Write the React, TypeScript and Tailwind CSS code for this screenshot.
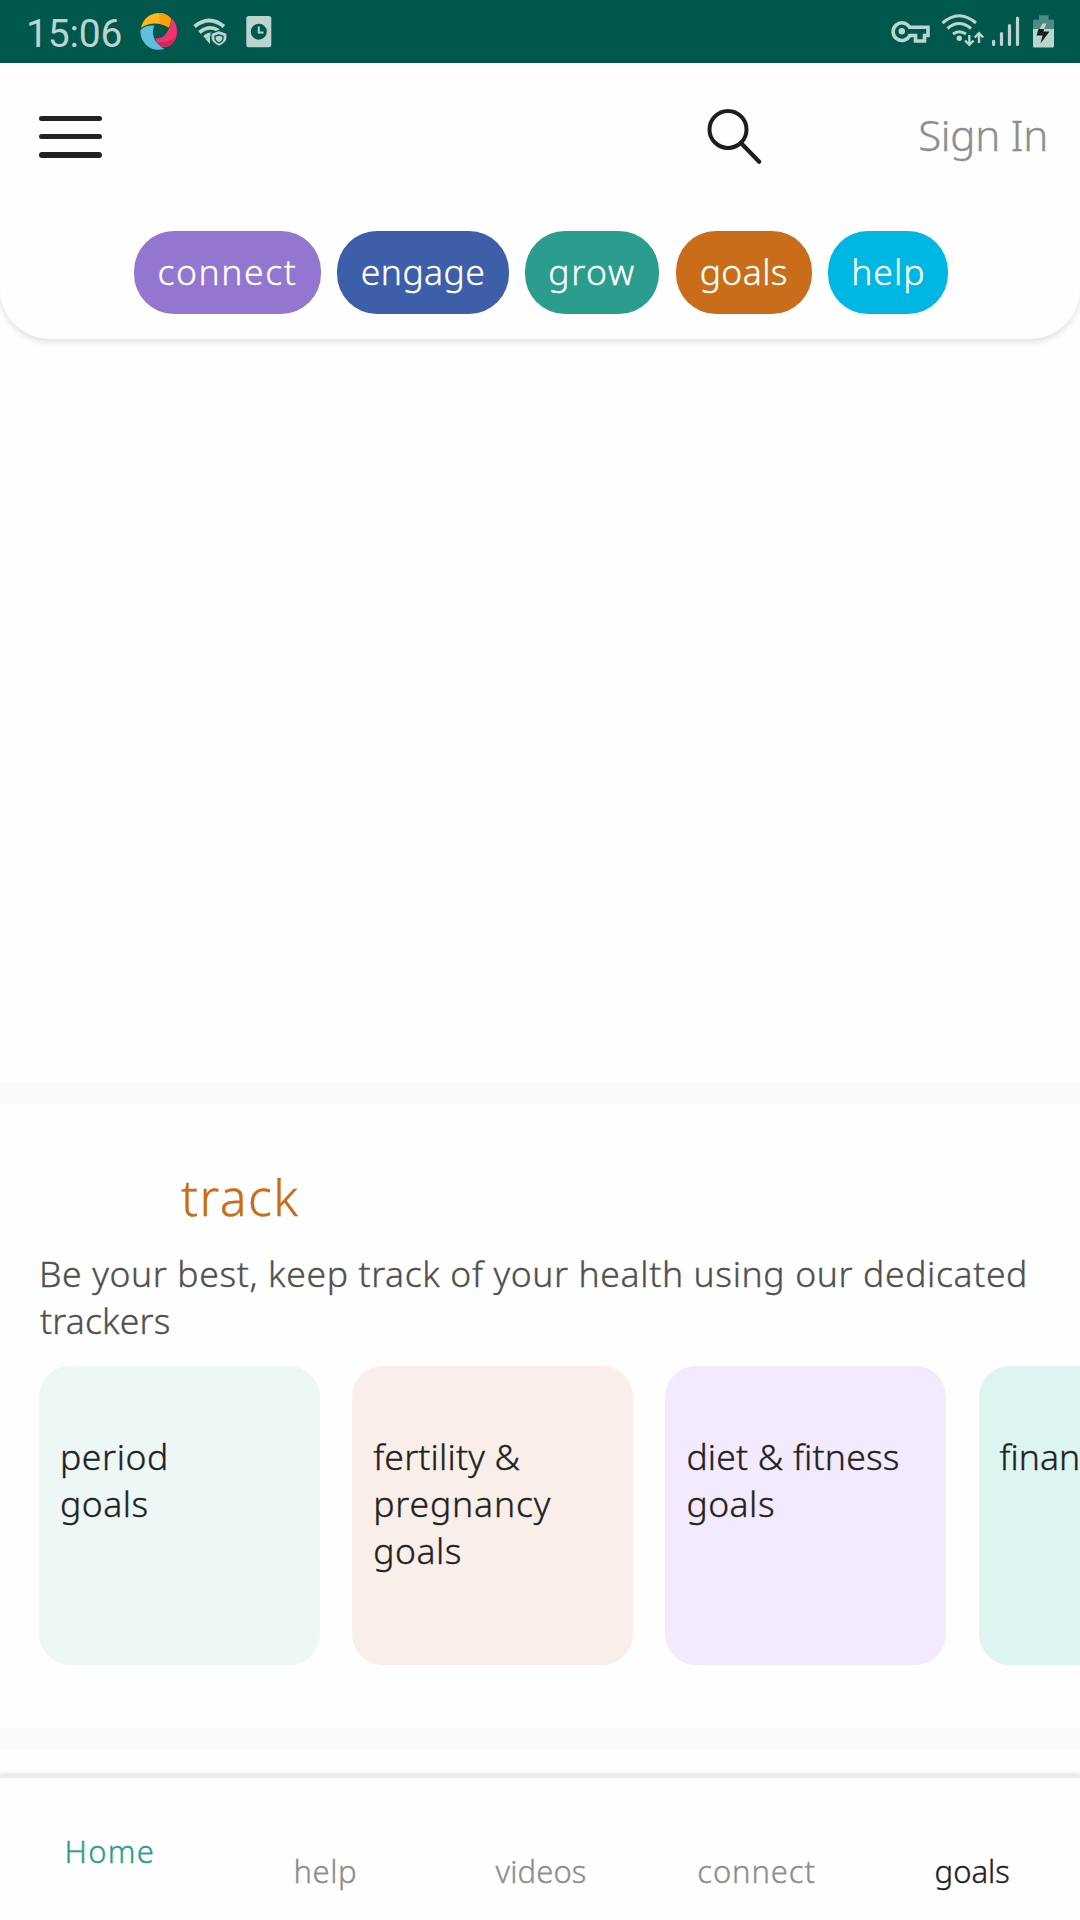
import type { ReactNode } from "react";

const pills = [
  { label: "connect", cls: "w-[187px] bg-[#9376d0] tracking-[1.6px]" },
  { label: "engage", cls: "w-[172px] bg-[#3d5ea8] tracking-[0.4px]" },
  { label: "grow", cls: "mr-[0.800px] w-[134px] bg-[#2b9d8f] tracking-[1.6px]" },
  { label: "goals", cls: "w-[136px] bg-[#c96d1a] tracking-[0.4px]" },
  { label: "help", cls: "w-[120px] bg-[#00b6e3] tracking-[1px] pl-[1px]" },
];

const tabs = [
  { label: "Home", cls: "text-[#2b9d8f] tracking-[1.2px] pt-[51px]" },
  { label: "help", cls: "text-[#8e8e8e] tracking-[0.6px] pt-[71px]" },
  { label: "videos", cls: "text-[#8e8e8e] tracking-[0.1px] pt-[71px]" },
  { label: "connect", cls: "text-[#8e8e8e] tracking-[0.9px] pt-[71px]" },
  { label: "goals", cls: "text-[#222222] tracking-[0px] pt-[71px]" },
];

function StatusBar() {
  return (
    <div className="flex h-[63px] shrink-0 bg-[#00574b] text-[#bcd4d0] [-webkit-text-stroke:0px]">
      <div className="w-[140px] pl-[26px] pt-[10.500px] font-['Roboto',sans-serif] text-[39px] font-normal leading-[46px] tracking-[-0.2px]">
        15:06
      </div>
      <svg width="140" height="63" viewBox="140 0 140 63" fill="none">
        <path d="M141 28 C143 18 151 13 159 13 C164 13 168 15 170.5 18 C171 22 170 25 168.500 27.500 C161 22 148 22 141 28Z" fill="#ffb61a" />
        <path d="M159 13 C164 13 168 15 170.500 18 C171 22 170 25 168.500 27.500 C166 25.500 163 24.500 160 24Z" fill="#ff9d0a" />
        <path d="M171.500 18 C177 23 179 33 175 40 C171 47 165 48.500 160 46 C157 44 156 41 155.500 38 C163 40 170 32 171.500 18Z" fill="#f0326e" />
        <path d="M176 36 C173 45 167 48.500 160 46 C158.500 45 157.500 43.500 157 42 C164 43 171 41 176 36Z" fill="#d3265b" />
        <path d="M140.500 30 C144 26 149 25 154.500 25.500 C151 32 153 43 164.500 49 C158 51 149 49.500 144.500 43 C141 38.500 140 34 140.500 30Z" fill="#62bfd9" />
        <g stroke="#bcd4d0" strokeWidth="3.8">
          <path d="M194.500 26.500 Q209 14.500 224 26.500" />
          <path d="M199.500 32.500 Q209 24.500 218.500 30.500" />
          <path d="M204.500 37.500 Q208 34 212 34.500" />
        </g>
        <path d="M205.500 39 L210 36 V44Z" fill="#bcd4d0" />
        <path d="M219 30.500 L227 33.500 V38 C227 42 223 44.500 219 46.500 C215 44.500 211 42 211 38 V33.500Z" fill="#bcd4d0" stroke="#00574b" strokeWidth="1.200" />
        <path d="M219 34.800 L223 36.300 V38.500 C223 40.500 221 42 219 43 C217 42 215 40.500 215 38.500 V36.300Z" stroke="#00574b" strokeWidth="1.300" />
        <rect x="246.300" y="16" width="25" height="31.300" rx="2.500" fill="#bcd4d0" />
        <circle cx="258.800" cy="31.700" r="8" fill="#00574b" />
        <path d="M258.800 26.500 V32.500 H263.500" stroke="#bcd4d0" strokeWidth="2" />
      </svg>
      <svg className="ml-auto" width="200" height="63" viewBox="880 0 200 63" fill="none">
        <path d="M909.500 27.200 H928 V35.500 H924.500 V41 H915.500 V35.500 H909.800 A8.800 8.800 0 1 1 909.500 27.200Z" stroke="#bcd4d0" strokeWidth="3.600" />
        <circle cx="901.800" cy="31.200" r="3.200" fill="#bcd4d0" />
        <g stroke="#bcd4d0" strokeWidth="3">
          <path d="M942.500 23 Q959 8.500 976 23" />
          <path d="M947.500 28.500 Q959 18.500 971 28.500" />
          <path d="M953 34 Q959 29.500 966 34" />
        </g>
        <circle cx="959.300" cy="38.300" r="2.700" fill="#bcd4d0" />
        <path d="M969.300 35 V44.500 M965 40.500 L969.300 44.800 L973.600 40.500 M979 43 V33.500 M974.700 37.500 L979 33.200 L983.300 37.500" stroke="#bcd4d0" strokeWidth="2.400" />
        <g stroke="#bcd4d0" strokeWidth="3.200" strokeLinecap="round">
          <path d="M993.600 41.300 V44.500 M1001.500 33.500 V44.500 M1009.500 25.500 V44.500 M1017.500 18.200 V44.500" />
        </g>
        <path d="M1039 15.300 H1048.500 V19.800 H1054 V29 H1033 V19.800 H1039Z" fill="#4f8b82" />
        <path d="M1033 29 H1054 V46 Q1054 47.500 1052.500 47.500 H1034.500 Q1033 47.500 1033 46Z" fill="#bcd4d0" />
        <path d="M1042.500 23.500 H1046.500 L1044 29 H1039.500Z" fill="#bcd4d0" />
        <path d="M1038.500 29 H1044 L1043.500 31.500 H1049.500 L1040.500 43.500 L1042.500 35.500 H1036.500Z" fill="#12211f" />
      </svg>
    </div>
  );
}

function Header() {
  return (
    <header className="h-[276px] shrink-0 rounded-b-[50px] bg-[#fefefe] shadow-[0_3px_6px_rgba(0,0,0,0.12)]">
      <div className="flex h-[151px] items-start pl-[39px] pr-[32px]">
        <div className="mt-[53px] flex w-[63px] flex-col gap-[13px]">
          <span className="h-[5px] rounded-full bg-[#222222]" />
          <span className="h-[5px] rounded-full bg-[#222222]" />
          <span className="h-[6px] rounded-full bg-[#222222]" />
        </div>
        <svg className="ml-[604px] mt-[45px]" width="60" height="60" viewBox="706 108 60 60" fill="none" stroke="#1d1d1b">
          <ellipse cx="728" cy="129.400" rx="18.500" ry="18.500" strokeWidth="4" />
          <path d="M741 143 L759.200 161.800" strokeWidth="4.200" strokeLinecap="round" />
        </svg>
        <div className="ml-auto mt-[42px] whitespace-nowrap text-[42px] leading-[60px] tracking-[-0.3px] text-[#8e8e8e]">Sign In</div>
      </div>
      <nav className="mt-[17px] flex gap-4 pl-[134px] text-[35.500px] leading-[47px] text-white">
        {pills.map((p) => (
          <div key={p.label} className={`flex h-[82.700px] items-center justify-center rounded-[40px] pb-[1px] ${p.cls}`}>
            {p.label}
          </div>
        ))}
      </nav>
    </header>
  );
}

function Card({ color, children }: { color: string; children: ReactNode }) {
  return (
    <div className={`h-[299px] w-[280.500px] shrink-0 rounded-[31px] pl-[21px] pt-[66.500px] leading-[47px] ${color}`}>
      {children}
    </div>
  );
}

export default function App() {
  return (
    <div className="flex h-[1920px] w-[1080px] flex-col overflow-hidden bg-[#fefefe] font-['Noto_Sans',sans-serif] font-light [-webkit-text-stroke:0.35px_currentColor]">
      <StatusBar />
      <Header />
      <div className="h-[744px] shrink-0" />
      <div className="h-[21px] shrink-0 bg-[#fafafa]" />
      <section className="h-[624px] shrink-0 pt-[63px]">
        <h2 className="pl-[181px] text-[50px] leading-[60px] tracking-[1.5px] text-[#c96d1a]">track</h2>
        <p className="mt-[22.500px] whitespace-nowrap pl-[39px] text-[35.500px] leading-[47px] tracking-[0.64px] text-[#505050]">
          Be your best, keep track of your health using our dedicated
          <br />
          <span className="pl-[1px] tracking-[0.2px]">trackers</span>
        </p>
        <div className="mt-[22.500px] flex gap-[32.700px] pl-[39px] text-[35.500px] text-[#222222]">
          <Card color="bg-[#edf7f6]">
            <p className="tracking-[0.6px]">period</p>
            <p className="tracking-[0.5px]">goals</p>
          </Card>
          <Card color="bg-[#f9eeea]">
            <p className="tracking-[0.2px]">fertility &amp;</p>
            <p className="tracking-[0.85px]">pregnancy</p>
            <p className="tracking-[0.5px]">goals</p>
          </Card>
          <Card color="bg-[#f3ebfd]">
            <p className="tracking-[0.2px]">diet &amp; fitness</p>
            <p className="tracking-[0.5px]">goals</p>
          </Card>
          <Card color="bg-[#def4f0]">
            <p className="whitespace-nowrap">finance</p>
          </Card>
        </div>
      </section>
      <div className="h-[21px] shrink-0 bg-[#fafafa]" />
      <div className="h-[26px] shrink-0" />
      <nav className="grid flex-1 grid-cols-5 border-t-3 border-[#ececec] bg-[#fefefe] pl-[2px] text-center text-[31px] leading-[44px] shadow-[0_-1px_5px_rgba(0,0,0,0.14)]">
        {tabs.map((t) => (
          <div key={t.label} className={t.cls}>
            {t.label}
          </div>
        ))}
      </nav>
    </div>
  );
}
